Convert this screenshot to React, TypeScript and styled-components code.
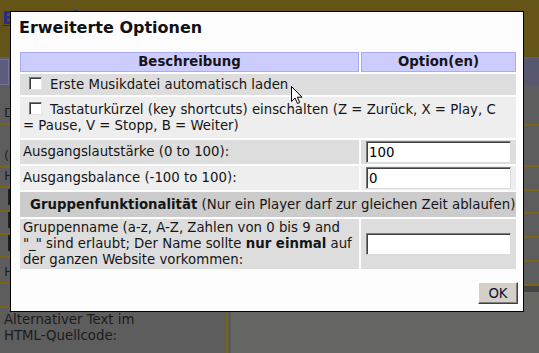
import React from 'react'
import styled, { createGlobalStyle } from 'styled-components'

const GlobalStyle = createGlobalStyle`
  html, body {
    margin: 0;
    padding: 0;
  }
  body {
    background: #5e5e5e;
    font-family: "DejaVu Sans", Verdana, sans-serif;
  }
`

const App: React.FC = () => {
  return (
    <>
      <GlobalStyle />
      <Page>
        <TopBand>
          <Brand>EMFF Player</Brand>
        </TopBand>
        <NavBand>
          <NavButton />
        </NavBand>
        <Body>
          <LeftCol>
            <FormRow $h={40}>Dateiname:</FormRow>
            <FormRow $h={43}>(optional)</FormRow>
            <FormRow $h={20}>Höhe:</FormRow>
            <FormRow $h={24}>
              <DimBox />
            </FormRow>
            <FormRow $h={23}>
              <DimBox />
            </FormRow>
            <FormRow $h={23}>
              <DimBox />
            </FormRow>
            <FormRow $h={26}>Hintergrund:</FormRow>
            <FormRow $h={24} />
            <PlainRow>
              Alternativer Text im
              <br />
              HTML-Quellcode:
            </PlainRow>
          </LeftCol>
          <RightCol>
            <RightRow $h={41} />
            <RightRow $h={41} />
            <RightRow $h={24} />
            <RightRow $h={23} />
            <RightRow $h={24} />
            <RightRow $h={24} />
            <RightRow $h={24} />
            <RightShadow />
          </RightCol>
        </Body>

        <Dialog>
          <Title>Erweiterte Optionen</Title>
          <OptionsTable>
            <colgroup>
              <col style={{ width: 339 }} />
              <col style={{ width: 155 }} />
            </colgroup>
            <thead>
              <tr>
                <HeadCell>Beschreibung</HeadCell>
                <HeadCell>Option(en)</HeadCell>
              </tr>
            </thead>
            <tbody>
              <tr>
                <Cell colSpan={2} $bg="#dddddd" $pad="3px 3px 2px">
                  <Checkbox />
                  Erste Musikdatei automatisch laden
                </Cell>
              </tr>
              <tr>
                <Cell colSpan={2} $bg="#eeeeee" $pad="5px 3px 4px">
                  <Checkbox />
                  Tastaturkürzel (key shortcuts) einschalten (Z = Zurück, X = Play, C
                  <br />= Pause, V = Stopp, B = Weiter)
                </Cell>
              </tr>
              <tr>
                <Cell $bg="#dddddd" $pad="1px 3px">
                  Ausgangslautstärke (0 to 100):
                </Cell>
                <Cell $bg="#dddddd" $pad="1px 4px">
                  <TextInput defaultValue="100" />
                </Cell>
              </tr>
              <tr>
                <Cell $bg="#eeeeee" $pad="1px 3px">
                  Ausgangsbalance (-100 to 100):
                </Cell>
                <Cell $bg="#eeeeee" $pad="1px 4px">
                  <TextInput defaultValue="0" />
                </Cell>
              </tr>
              <tr>
                <Cell colSpan={2} $bg="#cccccc" $pad="5px 10px 4px">
                  <b>Gruppenfunktionalität</b> (Nur ein Player darf zur gleichen Zeit ablaufen)
                </Cell>
              </tr>
              <tr>
                <Cell $bg="#dddddd" $pad="1px 3px">
                  Gruppenname (a-z, A-Z, Zahlen von 0 bis 9 and
                  <br />
                  "_" sind erlaubt; Der Name sollte <b>nur einmal</b> auf
                  <br />
                  der ganzen Website vorkommen:
                </Cell>
                <Cell $bg="#dddddd" $pad="1px 4px">
                  <TextInput defaultValue="" />
                </Cell>
              </tr>
            </tbody>
          </OptionsTable>
          <Footer>
            <OkButton>OK</OkButton>
          </Footer>
        </Dialog>

        <Cursor width="12" height="19" viewBox="0 0 12 19">
          <path
            d="M0.5 0.5 L0.5 15.5 L4 12 L6.5 17.5 L8.7 16.5 L6.3 11.2 L11 11.2 Z"
            fill="#ffffff"
            stroke="#000000"
            strokeWidth="1"
            strokeLinejoin="miter"
          />
        </Cursor>
      </Page>
    </>
  )
}

export default App

const Page = styled.div`
  position: relative;
  width: 539px;
  height: 353px;
  overflow: hidden;
  display: flex;
  flex-direction: column;
  background: #5e5e5e;
  font-size: 13px;
  color: #1b1b1b;
`

const TopBand = styled.div`
  flex: 0 0 57px;
  box-sizing: border-box;
  padding: 8px 2px;
  background: #655417;
`

const Brand = styled.a`
  font-weight: bold;
  font-size: 17px;
  color: #2a2a90;
  text-decoration: underline;
`

const NavBand = styled.div`
  flex: 0 0 28px;
  display: flex;
  align-items: center;
  background: #57576f;
  border-top: 1px solid #5e5e76;
  box-sizing: border-box;
`

const NavButton = styled.div`
  width: 8px;
  height: 24px;
  border: 1px solid #72729c;
  border-left: none;
  background: #5c5c7c;
`

const Body = styled.div`
  flex: 1 1 auto;
  display: flex;
`

const LeftCol = styled.div`
  width: 226px;
  flex: 0 0 226px;
  display: flex;
  flex-direction: column;
  background: #5d5d5d;
  border-right: 2px solid #7a6416;
`

const FormRow = styled.div<{ $h: number }>`
  height: ${p => p.$h}px;
  box-sizing: border-box;
  flex: 0 0 auto;
  display: flex;
  align-items: flex-end;
  padding: 0 4px 2px;
  border-bottom: 2px solid #7a6418;
  color: #1d1d1d;
  line-height: 16px;
`

const DimBox = styled.div`
  width: 12px;
  height: 12px;
  margin: 0 0 3px 4px;
  border: 2px solid #1f1f1f;
  background: #5a5a5a;
`

const PlainRow = styled.div`
  padding: 4px 4px;
  font-size: 13.3px;
  line-height: 16px;
  color: #1b1b1b;
`

const RightCol = styled.div`
  flex: 1 1 auto;
  display: flex;
  flex-direction: column;
  background: #666763;
  border-left: 3px solid #595a57;
`

const RightRow = styled.div<{ $h: number }>`
  height: ${p => p.$h}px;
  box-sizing: border-box;
  flex: 0 0 auto;
  background: #5d5d5d;
  border-bottom: 2px solid #7a6418;
`

const RightShadow = styled.div`
  height: 6px;
  background: #454545;
`

const Dialog = styled.div`
  position: absolute;
  left: 10px;
  top: 11px;
  width: 514px;
  height: 301px;
  box-sizing: border-box;
  display: flex;
  flex-direction: column;
  padding: 4px 5px 7px 7px;
  background: #fdfdfd;
  border: 1px solid #000000;
`

const Title = styled.h2`
  margin: 0 0 10px 1px;
  font-size: 16px;
  line-height: 24px;
  font-weight: bold;
  color: #111111;
`

const OptionsTable = styled.table`
  width: 500px;
  border-collapse: separate;
  border-spacing: 2px;
  table-layout: fixed;
  font-size: 13.3px;
`

const HeadCell = styled.th`
  padding: 1px 4px;
  line-height: 16px;
  background: #ccccff;
  border: 1px solid #a9a9f4;
  font-weight: bold;
  color: #151515;
  text-align: center;
`

const Cell = styled.td<{ $bg: string; $pad: string }>`
  padding: ${p => p.$pad};
  background: ${p => p.$bg};
  line-height: 16px;
  color: #151515;
  text-align: left;
  vertical-align: middle;
  white-space: nowrap;
`

const Checkbox = styled.span`
  display: inline-block;
  width: 11px;
  height: 11px;
  margin: 0 8px 0 6px;
  vertical-align: -1px;
  background: #ffffff;
  border: 1px solid;
  border-color: #7a7a7a #e6e6e6 #e6e6e6 #7a7a7a;
  box-shadow: inset 1px 1px 0 #3c3c3c;
`

const TextInput = styled.input`
  display: block;
  width: 145px;
  height: 22px;
  box-sizing: border-box;
  margin: 0 0 0 1px;
  padding: 0 2px;
  font-family: "DejaVu Sans", Verdana, sans-serif;
  font-size: 13.3px;
  color: #000000;
  background: #ffffff;
  border: 1px solid;
  border-color: #7b7b7b #dcdcdc #dcdcdc #7b7b7b;
  box-shadow: inset 1px 1px 0 #404040;
  outline: none;
`

const Footer = styled.div`
  margin-top: auto;
  display: flex;
  justify-content: flex-end;
`

const OkButton = styled.button`
  width: 40px;
  height: 22px;
  padding: 0;
  font-family: "DejaVu Sans", Verdana, sans-serif;
  font-size: 13.3px;
  color: #0c0c3a;
  background: #d4d0c8;
  border: 1px solid;
  border-color: #ffffff #404040 #404040 #ffffff;
  box-shadow: inset -1px -1px 0 #808080;
`

const Cursor = styled.svg`
  position: absolute;
  left: 291px;
  top: 86px;
`
